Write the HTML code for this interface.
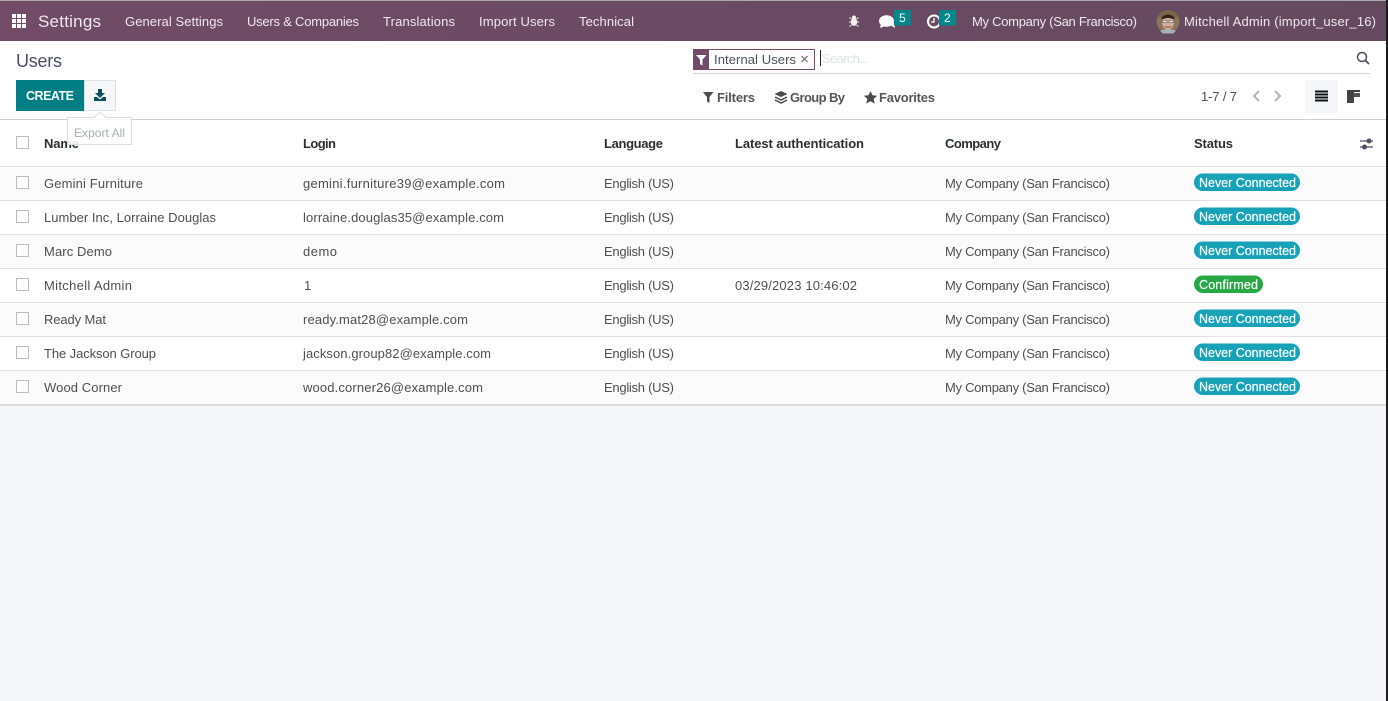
<!DOCTYPE html>
<html><head><meta charset="utf-8"><title>Users</title>
<style>
html,body{margin:0;padding:0;width:1388px;height:701px;overflow:hidden;background:#f5f6fa}
svg{display:block;position:absolute;left:0;top:0}
text{font-family:"Liberation Sans",sans-serif;font-size:13px;fill:#4c4c4c}
.n{fill:#efe9ee}
.h{font-weight:bold;fill:#2b2f33}
.t{fill:#4f4f4f}
.b{font-size:12.500px;fill:#fff;stroke:#fff;stroke-width:.2px}
.f{font-weight:bold;fill:#555}
</style></head><body>
<svg width="1388" height="701" viewBox="0 0 1388 701" xmlns="http://www.w3.org/2000/svg">
<defs><linearGradient id="nav" x1="0" x2="1" y1="0" y2="0"><stop offset="0" stop-color="#714b67"/><stop offset="1" stop-color="#654a5f"/></linearGradient></defs>
<rect width="1388" height="701" fill="#f5f6fa"/>
<rect width="1388" height="405" fill="#fff"/>
<rect width="1388" height="1" fill="#a9a9a9"/>
<rect y="1" width="1388" height="40" fill="url(#nav)"/>

<!-- apps icon -->
<g fill="#fff"><rect x="12" y="14" width="4" height="4"/><rect x="17" y="14" width="4" height="4"/><rect x="22" y="14" width="4" height="4"/><rect x="12" y="19" width="4" height="4"/><rect x="17" y="19" width="4" height="4"/><rect x="22" y="19" width="4" height="4"/><rect x="12" y="24" width="4" height="4"/><rect x="17" y="24" width="4" height="4"/><rect x="22" y="24" width="4" height="4"/></g>
<text class="n" x="38" y="27" style="font-size:17px" textLength="63">Settings</text>
<text class="n" x="125" y="26" textLength="98">General Settings</text>
<text class="n" x="247" y="26" textLength="112">Users &amp; Companies</text>
<text class="n" x="383" y="26" textLength="72">Translations</text>
<text class="n" x="479" y="26" textLength="76">Import Users</text>
<text class="n" x="579" y="26" textLength="55">Technical</text>

<!-- bug -->
<g fill="#f4eef3"><ellipse cx="854" cy="22" rx="3.200" ry="3.900"/><circle cx="854" cy="17.500" r="2"/></g>
<path d="M849.500 17.500l2 1.500M858.500 17.500l-2 1.500M849 22h2M859 22h-2M849.500 26.500l2-1.500M858.500 26.500l-2-1.500" stroke="#f4eef3" stroke-width="1" fill="none"/>
<!-- comments -->
<ellipse cx="886.500" cy="21" rx="7.500" ry="5.800" fill="#fff"/><path d="M881 24l-1 4 5-2zM890 25l5 3-1-5z" fill="#fff"/>
<rect x="894" y="10" width="17" height="15.500" fill="#01878c"/>
<text x="899" y="22" style="font-size:12px;fill:#fff" textLength="7">5</text>
<!-- clock -->
<circle cx="934" cy="21.500" r="6" fill="none" stroke="#fff" stroke-width="2"/><path d="M934 18v4h-3" fill="none" stroke="#fff" stroke-width="1.300"/>
<rect x="939" y="10" width="17" height="15.500" fill="#01878c"/>
<text x="944" y="22" style="font-size:12px;fill:#fff" textLength="7">2</text>

<text class="n" x="972" y="26" textLength="165">My Company (San Francisco)</text>
<!-- avatar -->
<circle cx="1168" cy="21.500" r="11.500" fill="#8a7358"/>
<path d="M1157.500 17a11.500 11.500 0 0 1 21 0z" fill="#7a6546"/>
<ellipse cx="1168" cy="22" rx="6" ry="7.500" fill="#d9ad96"/>
<path d="M1161 18q7-7 14 0l-1 1.500q-6-3-12 0z" fill="#2f2621"/>
<path d="M1162.500 20.500h4.500v2.200h-4.500zM1169 20.500h4.500v2.200h-4.500z" fill="#efe6e0" stroke="#555" stroke-width=".6"/>
<path d="M1165 26.500q3 1.500 6 0" stroke="#a0524a" fill="none"/>
<path d="M1160 31q8-4 16 0l-3 2.500h-10z" fill="#a9b2b5"/>
<text class="n" x="1184" y="26" textLength="192">Mitchell Admin (import_user_16)</text>

<!-- control panel -->
<text x="16" y="67" style="font-size:18px;fill:#4a5060" textLength="46">Users</text>
<rect x="16" y="80" width="68" height="31" fill="#017e84"/>
<text x="26" y="100" style="font-size:12.500px;font-weight:bold;fill:#f2fafa" textLength="48">CREATE</text>
<rect x="84.500" y="80.500" width="31" height="30" fill="#f5f6fa" stroke="#dee2e6"/>
<path d="M98 89h4v4h3l-5 5-5-5h3z" fill="#0d4f5c"/>
<path d="M94 97h3l3 2.500 3-2.500h3v4h-12z" fill="#0d4f5c"/>

<!-- search -->
<rect x="693" y="49" width="16" height="21" fill="#714b67"/>
<rect x="693.500" y="49.500" width="121" height="20" fill="none" stroke="#714b67"/>
<path d="M696 55h10.500l-4 4.500v6l-2.500-1.500v-4.500z" fill="#fff"/>
<text x="714" y="64" textLength="82" style="fill:#495057">Internal Users</text>
<path d="M801.500 56l6 6M807.500 56l-6 6" stroke="#777" stroke-width="1.300"/>
<rect x="820" y="50" width="1" height="16" fill="#222"/>
<text x="822" y="63" textLength="47" style="fill:#dfe2e6">Search...</text>
<rect x="693" y="73" width="677" height="1" fill="#d4d4d4"/>
<circle cx="1362" cy="57" r="4.500" fill="none" stroke="#4a5060" stroke-width="1.500"/>
<path d="M1365.300 60.300l3.700 3.700" stroke="#4a5060" stroke-width="1.800"/>

<!-- filters -->
<path d="M703 92h10.500l-4 5v6l-2.500-1.500v-4.500z" fill="#4c4c4c"/>
<text class="f" x="717" y="102" textLength="38">Filters</text>
<path d="M781 91l6.500 3-6.500 3-6.500-3z" fill="#4c4c4c"/>
<path d="M775 97l6 3 6-3M775 100l6 3 6-3" fill="none" stroke="#4c4c4c" stroke-width="1.500"/>
<text class="f" x="790" y="102" textLength="55">Group By</text>
<path d="M870.500 91l2 4.300 4.700.500-3.500 3.200 1 4.600-4.200-2.400-4.200 2.400 1-4.600-3.500-3.200 4.700-.500z" fill="#4c4c4c"/>
<text class="f" x="879" y="102" textLength="56">Favorites</text>

<!-- pager -->
<text x="1201" y="101" textLength="36" style="fill:#4c4c4c">1-7 / 7</text>
<path d="M1259 91l-5 5 5 5M1275 91l5 5-5 5" fill="none" stroke="#adb5bd" stroke-width="2"/>
<rect x="1305" y="80" width="33" height="33" fill="#f5f6fa"/>
<g fill="#111"><rect x="1315" y="90.500" width="13" height="2"/><rect x="1315" y="93.500" width="13" height="2"/><rect x="1315" y="96.500" width="13" height="2"/><rect x="1315" y="99.500" width="13" height="2"/></g>
<rect x="1347" y="90" width="13" height="2" fill="#444"/><rect x="1347" y="92" width="7" height="11" fill="#444"/><rect x="1354" y="93" width="6" height="4" fill="#555"/>

<rect y="119" width="1386" height="1" fill="#cfcfcf"/>

<!-- table rows -->
<rect y="167" width="1386" height="33" fill="#fbfbfb"/>
<rect y="235" width="1386" height="33" fill="#fbfbfb"/>
<rect y="303" width="1386" height="33" fill="#fbfbfb"/>
<rect y="371" width="1386" height="33" fill="#fbfbfb"/>
<g fill="#e2e2e2"><rect y="166" width="1386" height="1"/><rect y="200" width="1386" height="1"/><rect y="234" width="1386" height="1"/><rect y="268" width="1386" height="1"/><rect y="302" width="1386" height="1"/><rect y="336" width="1386" height="1"/><rect y="370" width="1386" height="1"/></g>
<rect y="404" width="1386" height="2" fill="#dcdee2"/>

<!-- checkboxes -->
<g fill="#fff" stroke="#bdbdbd"><rect x="16.500" y="136.500" width="12" height="12"/><rect x="16.500" y="176.500" width="12" height="12"/><rect x="16.500" y="210.500" width="12" height="12"/><rect x="16.500" y="244.500" width="12" height="12"/><rect x="16.500" y="278.500" width="12" height="12"/><rect x="16.500" y="312.500" width="12" height="12"/><rect x="16.500" y="346.500" width="12" height="12"/><rect x="16.500" y="380.500" width="12" height="12"/></g>

<!-- header -->
<text class="h" x="44" y="148" textLength="35">Name</text>
<text class="h" x="303" y="148" textLength="33">Login</text>
<text class="h" x="604" y="148" textLength="59">Language</text>
<text class="h" x="735" y="148" textLength="129">Latest authentication</text>
<text class="h" x="945" y="148" textLength="56">Company</text>
<text class="h" x="1194" y="148" textLength="39">Status</text>
<path d="M1360 141h13M1360 147h13" stroke="#4a5060" stroke-width="1.300"/>
<circle cx="1369" cy="141" r="2.500" fill="#4a5060"/><circle cx="1364.500" cy="147" r="2.500" fill="#4a5060"/>

<!-- row 1 -->
<text class="t" x="44" y="188" textLength="99">Gemini Furniture</text>
<text class="t" x="303" y="188" textLength="202">gemini.furniture39@example.com</text>
<text class="t" x="604" y="188" textLength="70">English (US)</text>
<text class="t" x="945" y="188" textLength="165">My Company (San Francisco)</text>
<rect x="1194" y="173.500" width="106" height="17.500" rx="8.750" fill="#17a2b8"/>
<text class="b" x="1199" y="187" textLength="97">Never Connected</text>
<!-- row 2 -->
<text class="t" x="44" y="222" textLength="172">Lumber Inc, Lorraine Douglas</text>
<text class="t" x="303" y="222" textLength="201">lorraine.douglas35@example.com</text>
<text class="t" x="604" y="222" textLength="70">English (US)</text>
<text class="t" x="945" y="222" textLength="165">My Company (San Francisco)</text>
<rect x="1194" y="207.500" width="106" height="17.500" rx="8.750" fill="#17a2b8"/>
<text class="b" x="1199" y="221" textLength="97">Never Connected</text>
<!-- row 3 -->
<text class="t" x="44" y="256" textLength="68">Marc Demo</text>
<text class="t" x="303" y="256" textLength="34">demo</text>
<text class="t" x="604" y="256" textLength="70">English (US)</text>
<text class="t" x="945" y="256" textLength="165">My Company (San Francisco)</text>
<rect x="1194" y="241.500" width="106" height="17.500" rx="8.750" fill="#17a2b8"/>
<text class="b" x="1199" y="255" textLength="97">Never Connected</text>
<!-- row 4 -->
<text class="t" x="44" y="290" textLength="88">Mitchell Admin</text>
<text class="t" x="304" y="290">1</text>
<text class="t" x="604" y="290" textLength="70">English (US)</text>
<text class="t" x="735" y="290" textLength="122">03/29/2023 10:46:02</text>
<text class="t" x="945" y="290" textLength="165">My Company (San Francisco)</text>
<rect x="1194" y="275.500" width="69" height="17.500" rx="8.750" fill="#28a745"/>
<text class="b" x="1199" y="289" textLength="59">Confirmed</text>
<!-- row 5 -->
<text class="t" x="44" y="324" textLength="62">Ready Mat</text>
<text class="t" x="303" y="324" textLength="165">ready.mat28@example.com</text>
<text class="t" x="604" y="324" textLength="70">English (US)</text>
<text class="t" x="945" y="324" textLength="165">My Company (San Francisco)</text>
<rect x="1194" y="309.500" width="106" height="17.500" rx="8.750" fill="#17a2b8"/>
<text class="b" x="1199" y="323" textLength="97">Never Connected</text>
<!-- row 6 -->
<text class="t" x="44" y="358" textLength="112">The Jackson Group</text>
<text class="t" x="303" y="358" textLength="188">jackson.group82@example.com</text>
<text class="t" x="604" y="358" textLength="70">English (US)</text>
<text class="t" x="945" y="358" textLength="165">My Company (San Francisco)</text>
<rect x="1194" y="343.500" width="106" height="17.500" rx="8.750" fill="#17a2b8"/>
<text class="b" x="1199" y="357" textLength="97">Never Connected</text>
<!-- row 7 -->
<text class="t" x="44" y="392" textLength="78">Wood Corner</text>
<text class="t" x="303" y="392" textLength="180">wood.corner26@example.com</text>
<text class="t" x="604" y="392" textLength="70">English (US)</text>
<text class="t" x="945" y="392" textLength="165">My Company (San Francisco)</text>
<rect x="1194" y="377.500" width="106" height="17.500" rx="8.750" fill="#17a2b8"/>
<text class="b" x="1199" y="391" textLength="97">Never Connected</text>

<!-- tooltip -->
<path d="M67.500 117.500H94l6-5.500 6 5.500h25.500v27h-64z" fill="#fff" fill-opacity=".88" stroke="#dcdcdc"/>
<text x="74" y="137" textLength="51" style="font-size:12px;fill:#a9adb2">Export All</text>

<!-- right dark strip -->
<rect x="1386" y="0" width="2" height="701" fill="#1b1b1d"/>
</svg>
</body></html>
